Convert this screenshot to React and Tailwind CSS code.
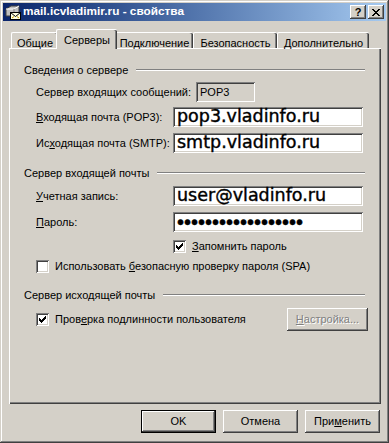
import React from 'react';

const raised = 'shadow-[inset_-1px_-1px_#404040,inset_1px_1px_#ffffff,inset_-2px_-2px_#808080,inset_2px_2px_#d4d0c8]';
const sunken = 'shadow-[inset_1px_1px_#808080,inset_-1px_-1px_#ffffff,inset_2px_2px_#404040,inset_-2px_-2px_#d4d0c8]';

function MailIcon() {
  return (
    <svg width="17" height="17" viewBox="0 0 17 17" className="shrink-0">
      <path d="M1 5 L6 2 L14 2 L14 9 L9 12 L1 12 Z" fill="#c0c0c0" stroke="#404040" strokeWidth="1" />
      <path d="M1 5 L9 5 L14 2" fill="none" stroke="#ffffff" strokeWidth="1" />
      <path d="M9 5 L9 12" stroke="#808080" strokeWidth="1" />
      <rect x="5.5" y="8.5" width="10" height="7" fill="#ffffe0" stroke="#000" strokeWidth="1" />
      <path d="M5.5 8.5 L10.5 12.5 L15.5 8.5" fill="none" stroke="#000" strokeWidth="1" />
      <path d="M7 14 L9 12.5 M14 14 L12 12.5" stroke="#c8a000" strokeWidth="1" />
    </svg>
  );
}

function TitleButton({ children }) {
  return (
    <div className={`w-[16px] h-[14px] bg-[#d4d0c8] ${raised} flex items-center justify-center text-[11px] font-bold leading-none text-black`}>
      {children}
    </div>
  );
}

function Check({ checked }) {
  return (
    <div className={`relative w-[13px] h-[13px] bg-white shrink-0 ${sunken}`}>
      {checked && (
        <svg className="absolute left-[3px] top-[3px]" width="7" height="7" viewBox="0 0 7 7">
          {[2, 3, 4, 3, 2, 1, 0].map((y, x) => (
            <rect key={x} x={x} y={y} width="1" height="3" fill="#000" />
          ))}
        </svg>
      )}
    </div>
  );
}

function GroupHeader({ children, className = '' }) {
  return (
    <div className={`flex items-center h-[14px] ${className}`}>
      <span className="mr-[8px]">{children}</span>
      <div className="flex-1 h-[2px] border-t border-t-[#808080] border-b border-b-white" />
    </div>
  );
}

function Field({ label, children, className = '' }) {
  return (
    <div className={`flex items-center h-[20px] pl-[12px] ${className}`}>
      <span className="w-[137px]">{label}</span>
      <div className={`w-[190px] h-full bg-white ${sunken} flex items-center pl-[4px] overflow-hidden`}>
        {children}
      </div>
    </div>
  );
}

function Button({ children, isDefault, disabled, className = '' }) {
  return (
    <div className={`${isDefault ? 'border border-black' : ''} ${className}`}>
      <div
        className={`h-full w-full bg-[#d4d0c8] ${raised} flex items-center justify-center ${
          disabled ? 'text-[#808080] [text-shadow:1px_1px_#ffffff]' : 'text-black'
        }`}
      >
        {children}
      </div>
    </div>
  );
}

const tabs = [
  { name: 'Общие', w: 'w-[47px]' },
  { name: 'Серверы', w: 'w-[61px]', active: true },
  { name: 'Подключение', w: 'w-[78px]' },
  { name: 'Безопасность', w: 'w-[84px]' },
  { name: 'Дополнительно', w: 'w-[92px]' },
];

export default function App() {
  const input = "font-['DejaVu_Sans',sans-serif] text-[17.5px] leading-none text-black [-webkit-text-stroke:0.4px_#000]";
  return (
    <div className="w-[389px] h-[443px] bg-[#d4d0c8] p-[3px] flex flex-col font-['Liberation_Sans',Arial,sans-serif] text-[11px] text-black shadow-[inset_-1px_-1px_#404040,inset_1px_1px_#d4d0c8,inset_-2px_-2px_#808080,inset_2px_2px_#ffffff] overflow-hidden select-none">
      {/* title bar */}
      <div className="h-[18px] bg-linear-to-r from-[#0a246a] to-[#a6caf0] flex items-center pl-[2px] pr-[2px]">
        <MailIcon />
        <span className="ml-[1px] text-white font-bold text-[11.8px] leading-none">mail.icvladimir.ru - свойства</span>
        <div className="ml-auto flex gap-[2px]">
          <TitleButton>?</TitleButton>
          <TitleButton>
            <svg width="8" height="7" viewBox="0 0 8 7">
              <path d="M0 0 L7 7 M1 0 L8 7 M7 0 L0 7 M8 0 L1 7" stroke="#000" strokeWidth="1" fill="none" />
            </svg>
          </TitleButton>
        </div>
      </div>

      {/* tabs */}
      <div className="flex items-end h-[19px] mt-[8px] ml-[8px] relative z-10">
        {tabs.map((t) =>
          t.active ? (
            <div
              key={t.name}
              className={`${t.w} -mx-[2px] h-[20px] -mb-[1px] bg-[#d4d0c8] border-t border-l border-white rounded-tl-[2px] rounded-tr-[2px] shadow-[inset_-1px_0_#404040,inset_-2px_0_#808080] flex justify-center pt-[2px] z-10`}
            >
              {t.name}
            </div>
          ) : (
            <div
              key={t.name}
              className={`${t.w} h-[16px] border-t border-l border-white rounded-tl-[2px] rounded-tr-[2px] shadow-[inset_-1px_0_#404040,inset_-2px_0_#808080] flex justify-center pt-[2px]`}
            >
              {t.name}
            </div>
          )
        )}
      </div>

      {/* panel */}
      <div className="ml-[6px] w-[372px] h-[356px] border-t border-l border-white shadow-[inset_-1px_-1px_#404040,inset_-2px_-2px_#808080] pl-[14px] pr-[16px] flex flex-col">
        <GroupHeader className="mt-[14px]">Сведения о сервере</GroupHeader>

        <div className="flex items-center h-[20px] mt-[5px] pl-[12px]">
          <span className="w-[160px]">
            Сервер вхо<u>д</u>ящих сообщений:
          </span>
          <div className={`w-[59px] h-full ${sunken} flex items-center pl-[4px]`}>POP3</div>
        </div>

        <Field className="mt-[5px]" label={<><u>В</u>ходящая почта (POP3):</>}>
          <span className={input}>pop3.vladinfo.ru</span>
        </Field>
        <Field className="mt-[6px]" label={<>Ис<u>х</u>одящая почта (SMTP):</>}>
          <span className={input}>smtp.vladinfo.ru</span>
        </Field>

        <GroupHeader className="mt-[13px]">Сервер входящей почты</GroupHeader>

        <Field className="mt-[6px]" label={<><u>У</u>четная запись:</>}>
          <span className={input}>user@vladinfo.ru</span>
        </Field>
        <Field className="mt-[6px]" label={<><u>П</u>ароль:</>}>
          <span className="font-['Liberation_Sans',sans-serif] text-[20px] leading-none text-black [-webkit-text-stroke:0.4px_#000]">
            ••••••••••••••••••
          </span>
        </Field>

        <div className="flex items-center h-[13px] mt-[8px] pl-[149px]">
          <Check checked />
          <span className="ml-[6px]">
            <u>З</u>апомнить пароль
          </span>
        </div>

        <div className="flex items-center h-[13px] mt-[7px] pl-[12px]">
          <Check />
          <span className="ml-[6px]">
            Использовать <u>б</u>езопасную проверку пароля (SPA)
          </span>
        </div>

        <GroupHeader className="mt-[15px]">Сервер исходящей почты</GroupHeader>

        <div className="flex items-center h-[23px] mt-[6px] pl-[12px] -mr-[3px]">
          <Check checked />
          <span className="ml-[6px]">
            Пров<u>е</u>рка подлинности пользователя
          </span>
          <Button disabled className="ml-auto w-[81px] h-[23px]">
            <span>
              <u>Н</u>астройка...
            </span>
          </Button>
        </div>
      </div>

      {/* bottom buttons */}
      <div className="flex justify-end gap-[7px] mt-[6px] pr-[6px]">
        <Button isDefault className="w-[75px] h-[23px]">OK</Button>
        <Button className="w-[75px] h-[23px]">Отмена</Button>
        <Button className="w-[75px] h-[23px]">
          <span>
            При<u>м</u>енить
          </span>
        </Button>
      </div>
    </div>
  );
}
